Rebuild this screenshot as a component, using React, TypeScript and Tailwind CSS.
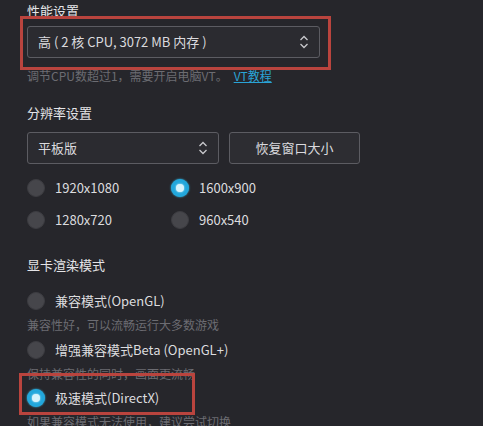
import React from 'react';

const font = { fontFamily: '"Microsoft YaHei", "Noto Sans CJK SC", "Noto Sans", sans-serif' };

function UpDown() {
  return (
    <svg width="10" height="16" viewBox="0 0 10 16" fill="none" stroke="#c8c8cc" strokeWidth="1.3">
      <path d="M1.5 6 L5 2.5 L8.5 6" />
      <path d="M1.5 10 L5 13.5 L8.5 10" />
    </svg>
  );
}

function Radio({ label, checked }: { label: string; checked?: boolean }) {
  return (
    <div className="flex items-center h-5">
      {checked ? (
        <span className="w-[18px] h-[18px] rounded-full bg-[#22a7dc] flex items-center justify-center shadow-[0_0_2px_#3cc3f0]">
          <span className="w-[8px] h-[8px] rounded-full bg-[#d6f3fc] shadow-[0_0_2px_#e6f8fd]" />
        </span>
      ) : (
        <span className="w-[18px] h-[18px] rounded-full bg-[#46464b] border border-[#3c3c41]" />
      )}
      <span className="ml-[10px] text-[13px] text-[#dcdcdf]">{label}</span>
    </div>
  );
}

export default function App() {
  return (
    <div className="relative w-[483px] h-[426px] overflow-hidden bg-[#26262b] pl-[27px]" style={font}>
      <div className="pt-[2px] h-5 leading-[18px] text-[13px] text-[#e4e4e7]">性能设置</div>

      <div className="mt-[6px] w-[293px] h-8 rounded-[3px] border border-[#5c5c62] bg-[#2b2b30] flex items-center justify-between pl-[10px] pr-[10px]">
        <span className="text-[13px] text-[#dadade]">高 ( 2 核 CPU, 3072 MB 内存 )</span>
        <UpDown />
      </div>

      <div className="mt-[9px] h-[18px] leading-[18px] text-[12px] text-[#6c6c72]">
        调节CPU数超过1，需要开启电脑VT。
        <span className="ml-[6px] text-[#2aa3d6] underline">VT教程</span>
      </div>

      <div className="mt-[19px] h-[18px] leading-[18px] text-[13px] text-[#e4e4e7]">分辨率设置</div>

      <div className="mt-[10px] flex gap-[10px]">
        <div className="w-[192px] h-8 rounded-[3px] border border-[#5c5c62] bg-[#2b2b30] flex items-center justify-between pl-[10px] pr-[10px]">
          <span className="text-[13px] text-[#dadade]">平板版</span>
          <UpDown />
        </div>
        <div className="w-[131px] h-8 rounded-[3px] border border-[#5c5c62] bg-[#2d2d32] flex items-center justify-center text-[13px] text-[#dadade]">
          恢复窗口大小
        </div>
      </div>

      <div className="mt-[14px] grid grid-cols-[144px_144px] gap-y-3">
        <Radio label="1920x1080" />
        <Radio label="1600x900" checked />
        <Radio label="1280x720" />
        <Radio label="960x540" />
      </div>

      <div className="mt-[26px] h-[18px] leading-[18px] text-[13px] text-[#e4e4e7]">显卡渲染模式</div>

      <div className="mt-[17px]">
        <Radio label="兼容模式(OpenGL)" />
      </div>
      <div className="mt-[5px] h-[18px] leading-[18px] text-[12px] text-[#6c6c72]">兼容性好，可以流畅运行大多数游戏</div>
      <div className="mt-[6px]">
        <Radio label="增强兼容模式Beta (OpenGL+)" />
      </div>
      <div className="mt-[5px] h-[18px] leading-[18px] text-[12px] text-[#6c6c72]">保持兼容性的同时，画面更流畅</div>
      <div className="mt-[5px]">
        <Radio label="极速模式(DirectX)" checked />
      </div>
      <div className="mt-[5px] h-[18px] leading-[18px] text-[12px] text-[#6c6c72]">如果兼容模式无法使用，建议尝试切换</div>

      <div className="absolute left-[20px] top-[16px] w-[311px] h-[54px] border-[3px] border-[#b9443e] pointer-events-none" />
      <div className="absolute left-[19px] top-[373px] w-[176px] h-[42px] border-[3px] border-[#b9443e] pointer-events-none" />
    </div>
  );
}
